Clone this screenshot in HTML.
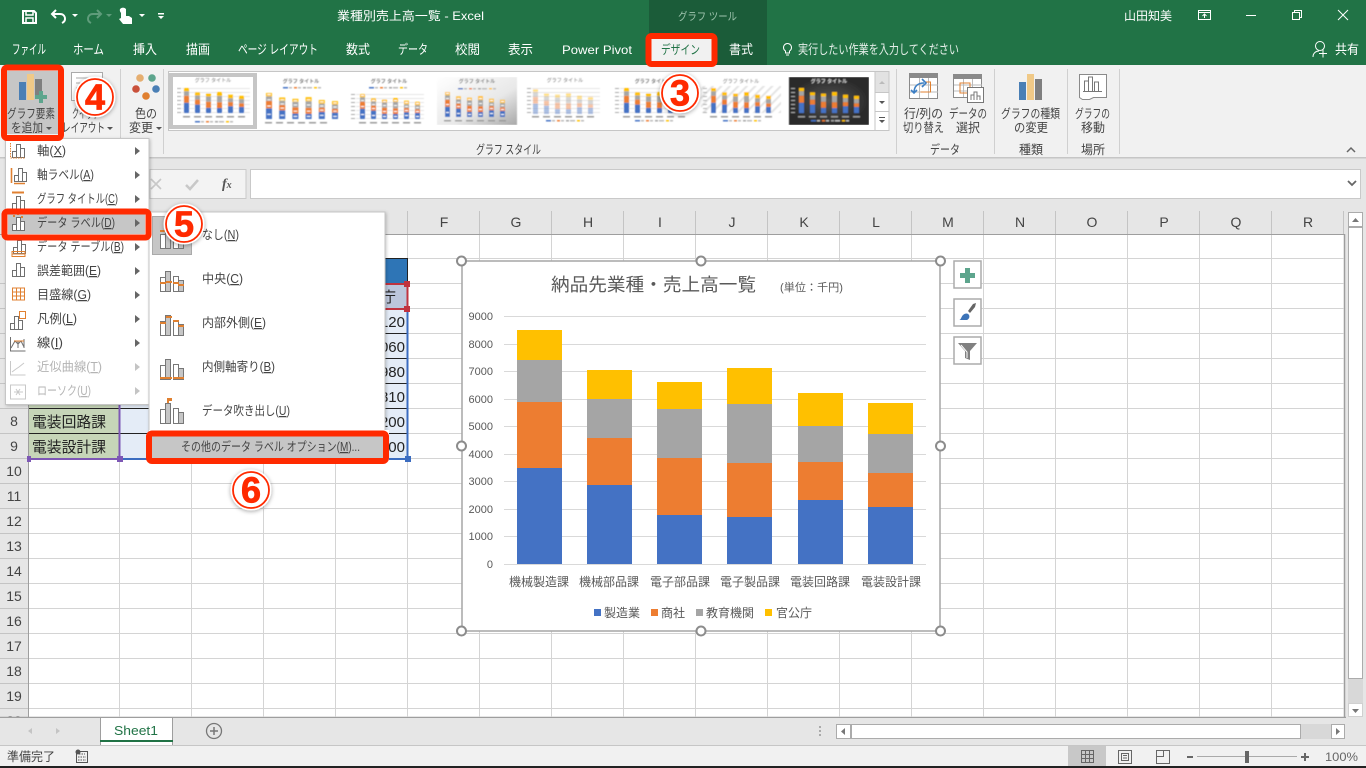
<!DOCTYPE html>
<html lang="ja"><head><meta charset="utf-8"><title>業種別売上高一覧 - Excel</title>
<style>
html,body{margin:0;padding:0;background:#fff;width:1366px;height:768px;overflow:hidden}
svg{display:block;font-family:"Liberation Sans","Noto Sans CJK JP",sans-serif}
.w text,text.w{fill:#fff}
.r{font-size:12.5px;fill:#444}
.m{font-size:12.5px;fill:#444}
.d{font-size:12.5px;fill:#b4b4b4}
.h{font-size:14px;fill:#444;text-anchor:middle}
.c{font-size:15px;fill:#222}
.n{font-size:15px;fill:#222;text-anchor:end}
.y{font-size:11px;fill:#595959;text-anchor:end}
.x{font-size:12px;fill:#595959}
.u{text-decoration:underline}
.num{font-size:36px;font-weight:bold;fill:#ff2a00;stroke:#ff2a00;stroke-width:.8px;text-anchor:middle;font-family:"Liberation Sans",sans-serif}
.tt{font-size:5px;fill:#777;text-anchor:middle}
</style></head><body>
<svg width="1366" height="768" viewBox="0 0 1366 768" xmlns="http://www.w3.org/2000/svg">
<defs>
<g id="mb">
<rect x="0" y="-10.3" width="5" height="10.3" fill="#4472c4"/><rect x="0" y="-17.3" width="5" height="7" fill="#ed7d31"/><rect x="0" y="-21.8" width="5" height="4.5" fill="#a5a5a5"/><rect x="0" y="-25" width="5" height="3.2" fill="#ffc000"/>
<rect x="11" y="-8.4" width="5" height="8.4" fill="#4472c4"/><rect x="11" y="-13.4" width="5" height="5" fill="#ed7d31"/><rect x="11" y="-17.6" width="5" height="4.2" fill="#a5a5a5"/><rect x="11" y="-20.7" width="5" height="3.1" fill="#ffc000"/>
<rect x="22" y="-5.2" width="5" height="5.2" fill="#4472c4"/><rect x="22" y="-11.3" width="5" height="6.1" fill="#ed7d31"/><rect x="22" y="-16.5" width="5" height="5.2" fill="#a5a5a5"/><rect x="22" y="-19.4" width="5" height="2.9" fill="#ffc000"/>
<rect x="33" y="-5" width="5" height="5" fill="#4472c4"/><rect x="33" y="-10.8" width="5" height="5.8" fill="#ed7d31"/><rect x="33" y="-17.1" width="5" height="6.3" fill="#a5a5a5"/><rect x="33" y="-21" width="5" height="3.9" fill="#ffc000"/>
<rect x="44" y="-6.8" width="5" height="6.8" fill="#4472c4"/><rect x="44" y="-10.9" width="5" height="4.1" fill="#ed7d31"/><rect x="44" y="-14.8" width="5" height="3.9" fill="#a5a5a5"/><rect x="44" y="-18.3" width="5" height="3.5" fill="#ffc000"/>
<rect x="55" y="-6.1" width="5" height="6.1" fill="#4472c4"/><rect x="55" y="-9.7" width="5" height="3.6" fill="#ed7d31"/><rect x="55" y="-13.9" width="5" height="4.2" fill="#a5a5a5"/><rect x="55" y="-17.2" width="5" height="3.3" fill="#ffc000"/>
</g>
<g id="lb" fill="#fff">
<rect x="1" y="-5" width="3" height="1"/><rect x="1" y="-13" width="3" height="1"/><rect x="1" y="-19" width="3" height="1"/><rect x="1" y="-24" width="3" height="1"/>
<rect x="12" y="-4" width="3" height="1"/><rect x="12" y="-11" width="3" height="1"/><rect x="12" y="-15" width="3" height="1"/><rect x="12" y="-19" width="3" height="1"/>
<rect x="23" y="-3" width="3" height="1"/><rect x="23" y="-8" width="3" height="1"/><rect x="23" y="-14" width="3" height="1"/><rect x="23" y="-18" width="3" height="1"/>
<rect x="34" y="-3" width="3" height="1"/><rect x="34" y="-8" width="3" height="1"/><rect x="34" y="-14" width="3" height="1"/><rect x="34" y="-19" width="3" height="1"/>
<rect x="45" y="-4" width="3" height="1"/><rect x="45" y="-9" width="3" height="1"/><rect x="45" y="-13" width="3" height="1"/><rect x="45" y="-17" width="3" height="1"/>
<rect x="56" y="-3" width="3" height="1"/><rect x="56" y="-8" width="3" height="1"/><rect x="56" y="-12" width="3" height="1"/><rect x="56" y="-16" width="3" height="1"/>
</g>
<g id="xl" fill="#9a9a9a"><rect x="0" y="0" width="7" height="1.5"/><rect x="11" y="0" width="7" height="1.5"/><rect x="22" y="0" width="7" height="1.5"/><rect x="33" y="0" width="7" height="1.5"/><rect x="44" y="0" width="7" height="1.5"/><rect x="55" y="0" width="7" height="1.5"/></g>
<g id="lg"><rect x="0" y="0" width="5" height="1.5" fill="#4472c4"/><rect x="6" y="0" width="3" height="1.5" fill="#bbb"/><rect x="11" y="0" width="3" height="1.5" fill="#ed7d31"/><rect x="15" y="0" width="3" height="1.5" fill="#bbb"/><rect x="20" y="0" width="3" height="1.5" fill="#a5a5a5"/><rect x="24" y="0" width="5" height="1.5" fill="#bbb"/><rect x="31" y="0" width="3" height="1.5" fill="#ffc000"/><rect x="35" y="0" width="3" height="1.5" fill="#bbb"/></g>
<g id="gr" stroke="#e6e6e6" stroke-width="1"><path d="M0 .5H68M0 4.500H68M0 8.500H68M0 12.500H68M0 16.500H68M0 20.500H68M0 24.500H68"/></g>
<g id="yl" fill="#aaa"><rect y="0" width="4" height="1"/><rect y="4" width="4" height="1"/><rect y="8" width="4" height="1"/><rect y="12" width="4" height="1"/><rect y="16" width="4" height="1"/><rect y="20" width="4" height="1"/><rect y="24" width="4" height="1"/></g>
<g id="mi" fill="#fff" stroke="#6f6f6f"><rect x=".5" y="7.500" width="4" height="6"/><rect x="4.500" y=".5" width="4" height="13"/><rect x="8.500" y="4.500" width="4" height="9"/></g>
<g id="sb" fill="#c6c6c6" stroke="#777"><rect x=".5" y="6.500" width="5" height="14" fill="#fff"/><rect x="5.500" y=".5" width="5" height="20"/><rect x="13.500" y="5.500" width="5" height="15" fill="#fff"/><rect x="18.500" y="9.500" width="5" height="11"/></g>
<filter id="sh" x="-30%" y="-30%" width="160%" height="160%"><feDropShadow dx="0" dy="1" stdDeviation="2" flood-color="#000" flood-opacity=".35"/></filter>
<filter id="ms" x="-5%" y="-5%" width="110%" height="110%"><feDropShadow dx="1" dy="1" stdDeviation="1.500" flood-color="#000" flood-opacity=".22"/></filter>
<filter id="bl" x="0" y="0" width="100%" height="100%"><feGaussianBlur stdDeviation=".4"/></filter>
<pattern id="hat" width="6" height="6" patternUnits="userSpaceOnUse" patternTransform="rotate(45)"><rect width="6" height="6" fill="#fff"/><rect width="2" height="6" fill="#e4e4e4"/></pattern>
<linearGradient id="gg" x1="0" x2="1" y1="0" y2="1"><stop offset="0" stop-color="#fff"/><stop offset=".6" stop-color="#e8e8e8"/><stop offset="1" stop-color="#a8a8a8"/></linearGradient>
<radialGradient id="dk"><stop offset="0" stop-color="#555"/><stop offset="1" stop-color="#2a2a2a"/></radialGradient>
</defs>

<!-- base -->
<rect width="1366" height="768" fill="#e6e6e6"/>
<rect width="1366" height="65" fill="#217346"/>
<rect x="649" width="118" height="65" fill="#1b5c39"/>

<!-- title bar -->
<g fill="none" stroke="#fff" stroke-width="2">
<path d="M23 11H34L36 13V23H23Z"/><path d="M26 11V15H33V11M26 23V18H33V23" stroke-width="1.500"/>
<path d="M56 10L52 14L56 18M52 14H60C64 14 65 17 65 19C65 21 64 22 62 23"/>
</g>
<path d="M72 14h6l-3 3z" fill="#fff"/>
<g fill="none" stroke="#5f9c7b" stroke-width="2"><path d="M97 10L101 14L97 18M101 14H93C89 14 88 17 88 19C88 21 89 22 91 23"/></g>
<path d="M106 14h6l-3 3z" fill="#5f9c7b"/>
<g fill="#fff"><path d="M120 9a4 4 0 0 1 6 0v7h3l3 2v6h-9l-4-5 2-1v-5a4 4 0 0 1-1-4z"/></g>
<path d="M139 14h6l-3 3z" fill="#fff"/>
<path d="M158 13h6v1.500h-6zM158 16h6l-3 3z" fill="#fff"/>
<g class="w" font-size="13">
<text x="337" y="20" font-size="12" textLength="147" lengthAdjust="spacingAndGlyphs">業種別売上高一覧  -  Excel</text>
<text x="1124" y="20" font-size="12" textLength="48" lengthAdjust="spacingAndGlyphs">山田知美</text>
<text x="12" y="54" textLength="34" lengthAdjust="spacingAndGlyphs">ファイル</text>
<text x="73" y="54" textLength="31" lengthAdjust="spacingAndGlyphs">ホーム</text>
<text x="133" y="54" textLength="24" lengthAdjust="spacingAndGlyphs">挿入</text>
<text x="186" y="54" textLength="24" lengthAdjust="spacingAndGlyphs">描画</text>
<text x="238" y="54" textLength="80" lengthAdjust="spacingAndGlyphs">ページ レイアウト</text>
<text x="346" y="54" textLength="24" lengthAdjust="spacingAndGlyphs">数式</text>
<text x="398" y="54" textLength="30" lengthAdjust="spacingAndGlyphs">データ</text>
<text x="455" y="54" textLength="25" lengthAdjust="spacingAndGlyphs">校閲</text>
<text x="508" y="54" textLength="25" lengthAdjust="spacingAndGlyphs">表示</text>
<text x="562" y="54" font-size="12" textLength="70" lengthAdjust="spacingAndGlyphs">Power Pivot</text>
<text x="729" y="54" textLength="24" lengthAdjust="spacingAndGlyphs">書式</text>
<text x="798" y="54" textLength="161" lengthAdjust="spacingAndGlyphs" style="fill:#e4eee8">実行したい作業を入力してください</text>
<text x="1335" y="54" textLength="24" lengthAdjust="spacingAndGlyphs">共有</text>
</g>
<text x="678" y="20" font-size="11" fill="#9fc4ae" textLength="59" lengthAdjust="spacingAndGlyphs">グラフ ツール</text>
<g fill="none" stroke="#fff" stroke-width="1">
<path d="M785.500 51a4 4 0 1 1 4 0v2h-4zM786 55h3"/>
<rect x="1198.500" y="10.500" width="12" height="9"/><path d="M1198.500 12.500h12M1204.500 18v-4M1202.500 16l2-2 2 2"/>
<path d="M1246 15.500h10"/>
<rect x="1292.500" y="12.500" width="7" height="7"/><path d="M1294.500 12.500v-2h7v7h-2"/>
<path d="M1338 10l10 10M1348 10l-10 10"/>
<circle cx="1320" cy="46" r="4.500"/><path d="M1313 57c0-4 3-6 6-6M1319 53.500h8M1323 49.500v8"/>
</g>

<!-- ribbon -->
<rect y="65" width="1366" height="92" fill="#f1f1f1"/>
<rect y="157" width="1366" height="1.500" fill="#c6c6c6"/>
<path d="M120.500 69V154M163.500 69V154M896.500 69V154M994.500 69V154M1067.500 69V154M1119.500 69V154" stroke="#d0d0d0" fill="none"/>
<!-- design tab -->
<rect x="650" y="37" width="63" height="29" fill="#f1f1f1"/>
<text x="661" y="54" class="r" style="fill:#217346" textLength="39" lengthAdjust="spacingAndGlyphs">デザイン</text>

<!-- add chart element button -->
<rect x="7" y="71" width="51" height="63" fill="#c6c6c6"/>
<rect x="19" y="82" width="7" height="18" fill="#4a7fb5"/><rect x="27" y="74" width="7" height="26" fill="#f0c987"/><rect x="35" y="79" width="7" height="17" fill="#7f7f7f"/>
<path d="M39 91h4v4h4v4h-4v4h-4v-4h-4v-4h4z" fill="#5da58d"/>
<text x="7" y="118" class="r" textLength="48" lengthAdjust="spacingAndGlyphs">グラフ要素</text>
<text x="11" y="132" class="r" textLength="32" lengthAdjust="spacingAndGlyphs">を追加</text>
<path d="M46 127h6l-3 3z" fill="#555"/>
<!-- quick layout -->
<rect x="71.500" y="72.500" width="31" height="28" fill="#fff" stroke="#aaa"/><path d="M76 78h14M76 83h10M76 88h8" stroke="#aaa"/>
<text x="72" y="118" class="r" textLength="28" lengthAdjust="spacingAndGlyphs">クイック</text>
<text x="62" y="132" class="r" textLength="43" lengthAdjust="spacingAndGlyphs">レイアウト</text>
<path d="M107 127h6l-3 3z" fill="#555"/>
<!-- colors -->
<circle cx="140" cy="78" r="3.800" fill="#e5ae70"/><circle cx="152" cy="78" r="3.800" fill="#5da58d"/><circle cx="136" cy="89" r="3.800" fill="#c9513b"/><circle cx="156" cy="89" r="3.800" fill="#4a7fb5"/><circle cx="146" cy="96" r="3.800" fill="#e08030"/>
<text x="135" y="118" class="r" textLength="22" lengthAdjust="spacingAndGlyphs">色の</text>
<text x="129" y="132" class="r" textLength="24" lengthAdjust="spacingAndGlyphs">変更</text>
<path d="M156 127h6l-3 3z" fill="#555"/>

<!-- gallery -->
<rect x="168.500" y="71.500" width="720" height="59" fill="#fff" stroke="#c6c6c6"/>
<rect x="169" y="73" width="88" height="56" fill="#c6c6c6"/>
<rect x="173" y="77" width="80" height="48" fill="#fff"/>
<g filter="url(#bl)">
<use href="#gr" x="182" y="88"/><use href="#yl" x="177" y="88"/>
<use href="#mb" x="184" y="113"/><use href="#xl" x="183" y="116"/><use href="#lg" x="195" y="121"/>
<text x="213" y="82" class="tt">グラフ タイトル</text>

<text x="301" y="83" class="tt" style="font-weight:bold">グラフ タイトル</text>
<use href="#lg" x="283" y="87"/>
<g transform="translate(266 119) scale(1.200 1.040)"><use href="#mb"/><use href="#lb"/></g>
<use href="#xl" x="265" y="122"/>

<text x="389" y="83" class="tt" style="font-weight:bold">グラフ タイトル</text>
<use href="#lg" x="369" y="87"/><use href="#yl" x="351" y="94"/>
<use href="#gr" x="356" y="94"/>
<use href="#mb" x="360" y="119"/><use href="#lb" x="360" y="119"/><use href="#xl" x="359" y="122"/>

<rect x="437" y="77" width="80" height="48" fill="url(#gg)"/>
<text x="477" y="83" class="tt" style="font-weight:bold">グラフ タイトル</text>
<use href="#lg" x="458" y="88"/>
<g transform="translate(445 117)"><use href="#mb"/><use href="#lb"/></g><use href="#xl" x="444" y="120"/>

<text x="565" y="82" class="tt">グラフ タイトル</text>
<use href="#gr" x="532" y="88"/><use href="#yl" x="527" y="88"/>
<g opacity=".45"><use href="#mb" x="533" y="114"/></g><use href="#xl" x="532" y="116"/><use href="#lg" x="546" y="120"/>

<text x="653" y="83" class="tt" style="font-weight:bold">グラフ タイトル</text>
<use href="#yl" x="615" y="88"/><use href="#gr" x="620" y="88"/>
<use href="#mb" x="624" y="113"/><use href="#xl" x="623" y="116"/><use href="#lg" x="635" y="120"/>

<rect x="701" y="86" width="80" height="27" fill="url(#hat)"/>
<text x="741" y="83" class="tt">グラフ タイトル</text><use href="#yl" x="703" y="88"/>
<use href="#mb" x="711" y="113"/><use href="#xl" x="710" y="116"/><use href="#lg" x="723" y="120"/>

<rect x="789" y="77" width="80" height="48" fill="url(#dk)"/>
<text x="829" y="83" class="tt" style="fill:#ddd;font-weight:bold">グラフ タイトル</text><use href="#yl" x="791" y="88"/>
<use href="#mb" x="799" y="113"/><use href="#xl" x="798" y="116"/><use href="#lg" x="811" y="120"/>
</g>

<rect x="875" y="71.500" width="14" height="21" fill="#e2e2e2" stroke="#c6c6c6"/><rect x="875" y="92.500" width="14" height="19" fill="#fff" stroke="#c6c6c6"/><rect x="875" y="111.500" width="14" height="19" fill="#fff" stroke="#c6c6c6"/>
<path d="M879 84h6l-3-3z" fill="#bbb"/><path d="M879 101h6l-3 3z" fill="#555"/><path d="M879 117h6v1h-6zM879 120h6l-3 3z" fill="#555"/>

<text x="476" y="154" class="r" textLength="65" lengthAdjust="spacingAndGlyphs">グラフ スタイル</text>
<text x="930" y="154" class="r" textLength="30" lengthAdjust="spacingAndGlyphs">データ</text>
<text x="1019" y="154" class="r" textLength="24" lengthAdjust="spacingAndGlyphs">種類</text>
<text x="1081" y="154" class="r" textLength="24" lengthAdjust="spacingAndGlyphs">場所</text>
<path d="M1347 152l4-4 4 4" fill="none" stroke="#666" stroke-width="1.500"/>

<!-- right ribbon icons -->
<rect x="909.500" y="73.500" width="28" height="25" fill="#fff" stroke="#8a8a8a"/><rect x="909" y="73" width="29" height="5" fill="#8a8a8a"/>
<path d="M919.500 78v20M928.500 78v20M910 85h28M910 92h28" stroke="#bbb"/>
<path d="M924.500 82h6v10h-10" fill="none" stroke="#e08030"/>
<path d="M914 93c0-7 4-10 10-10M922 79l4 4-4 4M911 90l3 3 3-3" fill="none" stroke="#3d7fc4" stroke-width="1.600"/>
<rect x="953.500" y="74.500" width="28" height="23" fill="#fff" stroke="#8a8a8a"/><rect x="953" y="74" width="29" height="5" fill="#8a8a8a"/>
<path d="M963.500 79v18M972.500 79v18M954 85h28M954 91h28" stroke="#bbb"/><path d="M960 83h10v10h-10z" fill="none" stroke="#e08030"/>
<rect x="967.500" y="87.500" width="16" height="15" fill="#fff" stroke="#777"/><path d="M971 100v-5h3v5M974 100v-8h3v8M977 100v-4h3v4" fill="none" stroke="#777"/>
<rect x="1019" y="82" width="7" height="18" fill="#4a7fb5"/><rect x="1027" y="74" width="7" height="26" fill="#f0c987"/><rect x="1035" y="79" width="7" height="21" fill="#7f7f7f"/>
<path d="M1079.500 74.500h27v23h-13l-4 2h-7l-3-2z" fill="#fff" stroke="#8a8a8a"/>
<path d="M1084.500 91v-10h4v10M1088.500 91v-14h4v14M1094.500 91v-9h4v9M1083 91.500h19" fill="none" stroke="#777"/>
<text x="904" y="118" class="r" textLength="39" lengthAdjust="spacingAndGlyphs">行/列の</text>
<text x="903" y="132" class="r" textLength="41" lengthAdjust="spacingAndGlyphs">切り替え</text>
<text x="949" y="118" class="r" textLength="38" lengthAdjust="spacingAndGlyphs">データの</text>
<text x="956" y="132" class="r" textLength="24" lengthAdjust="spacingAndGlyphs">選択</text>
<text x="1001" y="118" class="r" textLength="59" lengthAdjust="spacingAndGlyphs">グラフの種類</text>
<text x="1014" y="132" class="r" textLength="34" lengthAdjust="spacingAndGlyphs">の変更</text>
<text x="1075" y="118" class="r" textLength="35" lengthAdjust="spacingAndGlyphs">グラフの</text>
<text x="1081" y="132" class="r" textLength="24" lengthAdjust="spacingAndGlyphs">移動</text>

<!-- formula bar -->
<rect x="150" y="169.500" width="96" height="29" fill="#f3f3f3" stroke="#c9c9c9"/>
<rect x="250.500" y="169.500" width="1110" height="29" fill="#fff" stroke="#c9c9c9"/>
<path d="M151 179l10 10M161 179l-10 10" stroke="#c8c8c8" stroke-width="1.600"/>
<path d="M186 185l4 4 8-9" fill="none" stroke="#c8c8c8" stroke-width="2.500"/>
<text x="222" y="188" font-size="14" fill="#555" style="font-family:'Liberation Serif',serif;font-style:italic;font-weight:bold">f<tspan font-size="10">x</tspan></text>
<path d="M1348 181l4 4 4-4" fill="none" stroke="#666" stroke-width="1.800"/>

<!-- sheet -->
<rect x="29" y="235" width="1315" height="482" fill="#fff"/>
<path d="M0 234.500H1344M28.500 211V717" stroke="#9e9e9e" fill="none"/>
<path d="M1344.500 234V717M0 717.500H1346" stroke="#9e9e9e" stroke-width="1.500" fill="none"/>
<path d="M119.500 235V717M191.500 235V717M263.500 235V717M335.500 235V717M407.500 235V717M479.500 235V717M551.500 235V717M623.500 235V717M695.500 235V717M767.500 235V717M839.500 235V717M911.500 235V717M983.500 235V717M1055.500 235V717M1127.500 235V717M1199.500 235V717M1271.500 235V717M29 258.500H1344M29 283.500H1344M29 308.500H1344M29 333.500H1344M29 358.500H1344M29 383.500H1344M29 408.500H1344M29 433.500H1344M29 458.500H1344M29 483.500H1344M29 508.500H1344M29 533.500H1344M29 558.500H1344M29 583.500H1344M29 608.500H1344M29 633.500H1344M29 658.500H1344M29 683.500H1344M29 708.500H1344" stroke="#d4d4d4" fill="none"/>
<path d="M407.500 211V234M479.500 211V234M551.500 211V234M623.500 211V234M695.500 211V234M767.500 211V234M839.500 211V234M911.500 211V234M983.500 211V234M1055.500 211V234M1127.500 211V234M1199.500 211V234M1271.500 211V234M1343.500 211V234" stroke="#c4c4c4" fill="none"/>
<path d="M0 283.500H28M0 308.500H28M0 333.500H28M0 358.500H28M0 383.500H28M0 408.500H28M0 433.500H28M0 458.500H28M0 483.500H28M0 508.500H28M0 533.500H28M0 558.500H28M0 583.500H28M0 608.500H28M0 633.500H28M0 658.500H28M0 683.500H28M0 708.500H28" stroke="#c4c4c4" fill="none"/>
<text class="h" x="444" y="227">F</text><text class="h" x="516" y="227">G</text><text class="h" x="588" y="227">H</text><text class="h" x="660" y="227">I</text><text class="h" x="732" y="227">J</text><text class="h" x="804" y="227">K</text><text class="h" x="876" y="227">L</text><text class="h" x="948" y="227">M</text><text class="h" x="1020" y="227">N</text><text class="h" x="1092" y="227">O</text><text class="h" x="1164" y="227">P</text><text class="h" x="1236" y="227">Q</text><text class="h" x="1308" y="227">R</text>
<text class="h" x="14" y="426">8</text><text class="h" x="14" y="451">9</text><text class="h" x="14" y="476">10</text><text class="h" x="14" y="501">11</text><text class="h" x="14" y="526">12</text><text class="h" x="14" y="551">13</text><text class="h" x="14" y="576">14</text><text class="h" x="14" y="601">15</text><text class="h" x="14" y="626">16</text><text class="h" x="14" y="651">17</text><text class="h" x="14" y="676">18</text><text class="h" x="14" y="701">19</text><text class="h" x="14" y="726">20</text>
<rect x="0" y="717" width="1346" height="28" fill="#e6e6e6"/>
<path d="M0 717.500H1346" stroke="#9e9e9e"/>

<!-- table -->
<rect x="29" y="404" width="90" height="55" fill="#c6d5b8"/>
<rect x="120" y="404" width="288" height="55" fill="#e4ecf7"/>
<rect x="336" y="259" width="72" height="25" fill="#2e75b6"/>
<rect x="336" y="284" width="72" height="25" fill="#bcc6dc"/>
<rect x="336" y="309" width="72" height="150" fill="#e4ecf7"/>
<path d="M29 408.500H408M29 433.500H408M336 308.500H408M336 333.500H408M336 358.500H408M336 383.500H408M119.500 404V459M407.500 259V284" stroke="#222" fill="none"/>
<path d="M336 258.500H408" stroke="#222"/>
<text class="c" x="32" y="427" textLength="74" lengthAdjust="spacingAndGlyphs">電装回路課</text>
<text class="c" x="32" y="452" textLength="74" lengthAdjust="spacingAndGlyphs">電装設計課</text>
<text class="n" x="396" y="302">庁</text>
<text class="n" x="405" y="327">1120</text><text class="n" x="405" y="352">1060</text><text class="n" x="405" y="377">1980</text><text class="n" x="405" y="402">1810</text><text class="n" x="405" y="427">1200</text><text class="n" x="405" y="452">1200</text>
<path d="M337 284H407.500V309H337" fill="none" stroke="#c0333f" stroke-width="2"/>
<path d="M407.500 309V459M120 459H407" fill="none" stroke="#3b6cc0" stroke-width="2"/>
<path d="M29 459H120M119.500 404V459" fill="none" stroke="#7d57b5" stroke-width="2"/>
<rect x="404" y="281" width="6" height="6" fill="#c0333f"/><rect x="404" y="306" width="6" height="6" fill="#c0333f"/>
<rect x="405" y="456" width="6" height="6" fill="#3b6cc0"/><rect x="117" y="456" width="6" height="6" fill="#7d57b5"/><rect x="27" y="456" width="4" height="6" fill="#7d57b5"/>

<!-- chart -->
<rect x="462" y="261" width="478" height="370" fill="#fff" stroke="#a6a6a6" stroke-width="1.500"/>
<text x="551" y="291" font-size="18" fill="#595959" textLength="205" lengthAdjust="spacingAndGlyphs">納品先業種・売上高一覧</text>
<text x="780" y="291" font-size="11" fill="#595959" textLength="63" lengthAdjust="spacingAndGlyphs">(単位：千円)</text>
<path d="M504 316.500H926M504 344.500H926M504 371.500H926M504 399.500H926M504 426.500H926M504 454.500H926M504 481.500H926M504 509.500H926M504 536.500H926M504 564.500H926" stroke="#d9d9d9"/>
<text class="y" x="493" y="320">9000</text><text class="y" x="493" y="348">8000</text><text class="y" x="493" y="375">7000</text><text class="y" x="493" y="403">6000</text><text class="y" x="493" y="430">5000</text><text class="y" x="493" y="458">4000</text><text class="y" x="493" y="485">3000</text><text class="y" x="493" y="513">2000</text><text class="y" x="493" y="540">1000</text><text class="y" x="493" y="568">0</text>
<g fill="#4472c4"><rect x="517" y="468" width="45" height="96"/><rect x="587" y="485" width="45" height="79"/><rect x="657" y="515" width="45" height="49"/><rect x="727" y="517" width="45" height="47"/><rect x="798" y="500" width="45" height="64"/><rect x="868" y="507" width="45" height="57"/></g>
<g fill="#ed7d31"><rect x="517" y="402" width="45" height="66"/><rect x="587" y="438" width="45" height="47"/><rect x="657" y="458" width="45" height="57"/><rect x="727" y="463" width="45" height="54"/><rect x="798" y="462" width="45" height="38"/><rect x="868" y="473" width="45" height="34"/></g>
<g fill="#a5a5a5"><rect x="517" y="360" width="45" height="42"/><rect x="587" y="399" width="45" height="39"/><rect x="657" y="409" width="45" height="49"/><rect x="727" y="404" width="45" height="59"/><rect x="798" y="426" width="45" height="36"/><rect x="868" y="434" width="45" height="39"/></g>
<g fill="#ffc000"><rect x="517" y="330" width="45" height="30"/><rect x="587" y="370" width="45" height="29"/><rect x="657" y="382" width="45" height="27"/><rect x="727" y="368" width="45" height="36"/><rect x="798" y="393" width="45" height="33"/><rect x="868" y="403" width="45" height="31"/></g>
<text class="x" x="509" y="586">機械製造課</text><text class="x" x="579" y="586">機械部品課</text><text class="x" x="650" y="586">電子部品課</text><text class="x" x="720" y="586">電子製品課</text><text class="x" x="790" y="586">電装回路課</text><text class="x" x="861" y="586">電装設計課</text>
<text class="x" x="604" y="617">製造業</text><text class="x" x="661" y="617">商社</text><text class="x" x="706" y="617">教育機関</text><text class="x" x="776" y="617">官公庁</text>
<rect x="594" y="609" width="7" height="7" fill="#4472c4"/><rect x="651" y="609" width="7" height="7" fill="#ed7d31"/><rect x="696" y="609" width="7" height="7" fill="#a5a5a5"/><rect x="765" y="609" width="7" height="7" fill="#ffc000"/>
<g fill="#fff" stroke="#8c8c8c" stroke-width="2"><circle cx="461.500" cy="261" r="4.500"/><circle cx="701" cy="261" r="4.500"/><circle cx="940.500" cy="261" r="4.500"/><circle cx="461.500" cy="446" r="4.500"/><circle cx="940.500" cy="446" r="4.500"/><circle cx="461.500" cy="631" r="4.500"/><circle cx="701" cy="631" r="4.500"/><circle cx="940.500" cy="631" r="4.500"/></g>
<g fill="#fff" stroke="#ababab" stroke-width="1.500"><rect x="954" y="261" width="27" height="27"/><rect x="954" y="299" width="27" height="27"/><rect x="954" y="337" width="27" height="27"/></g>
<path d="M965 268h5v5h5v5h-5v5h-5v-5h-5v-5h5z" fill="#5da58d"/>
<path d="M968 311l5-7 3-1-1 4-5 6z" fill="#666"/><path d="M959 320c2 0 2-3 4-5 2-2 5-2 6 0 1 2 0 4-2 5z" fill="#3d74b8"/>
<path d="M958 343h19l-7 8v9l-5-2v-7z" fill="#808080"/><path d="M961 345l6 7v6" fill="none" stroke="#fff"/>

<!-- vertical scroll -->
<rect x="1346" y="211" width="20" height="506" fill="#e6e6e6"/>
<rect x="1348" y="227" width="15" height="476" fill="#d8d8d8"/>
<rect x="1348.500" y="227.500" width="14" height="451" fill="#fff" stroke="#ababab"/>
<rect x="1348.500" y="212.500" width="14" height="14" fill="#fff" stroke="#ababab"/>
<rect x="1348.500" y="703.500" width="14" height="13" fill="#fff" stroke="#d0d0d0"/>
<path d="M1352 222h7l-3.500-4z" fill="#777"/><path d="M1352 709h7l-3.500 4z" fill="#777"/>

<!-- tabs -->
<path d="M32 728v6l-4-3zM56 728v6l4-3z" fill="#c4c4c4"/>
<path d="M100.500 745V717.500H172.500V745" fill="#fff" stroke="#9e9e9e"/>
<rect x="100" y="740" width="73" height="2" fill="#217346"/>
<text x="114" y="735" font-size="13" fill="#217346" textLength="44" lengthAdjust="spacingAndGlyphs">Sheet1</text>
<circle cx="214" cy="731" r="7.500" fill="none" stroke="#777" stroke-width="1.300"/><path d="M210 731h8M214 727v8" stroke="#777" stroke-width="1.500"/>
<path d="M820 726v2M820 730v2M820 734v2" stroke="#aaa" stroke-width="2"/>
<rect x="837" y="724" width="508" height="15" fill="#d8d8d8"/>
<rect x="836.500" y="724.500" width="14" height="14" fill="#fff" stroke="#ababab"/>
<rect x="851.500" y="724.500" width="449" height="14" fill="#fff" stroke="#ababab"/>
<rect x="1331.500" y="724.500" width="13" height="14" fill="#fff" stroke="#ababab"/>
<path d="M845 728v7l-4-3.500zM1336 728v7l4-3.500z" fill="#777"/>

<!-- status -->
<rect y="745" width="1366" height="21" fill="#f1f1f1"/><rect y="745" width="1366" height="1" fill="#c6c6c6"/><rect y="766" width="1366" height="2" fill="#222"/>
<text x="7" y="761" class="r" textLength="48" lengthAdjust="spacingAndGlyphs">準備完了</text>
<circle cx="78" cy="752" r="2.500" fill="#555"/><rect x="76.500" y="751.500" width="11" height="11" fill="none" stroke="#555"/><path d="M79 754h6M78 757h8M78 760h8" stroke="#555" stroke-dasharray="1.500 1"/>
<rect x="1068" y="746" width="38" height="20" fill="#c8c8c8"/>
<path d="M1081.500 750.500h12v12h-12zM1085.500 750.500v12M1089.500 750.500v12M1081.500 754.500h12M1081.500 758.500h12" fill="none" stroke="#666"/>
<path d="M1118.500 750.500h13v13h-13zM1121.500 753.500h7v7h-7zM1123 755.500h4M1123 758h4" fill="none" stroke="#666"/>
<path d="M1156.500 750.500h13v13h-13zM1163.500 750.500v6h-7" fill="none" stroke="#666"/>
<path d="M1187 757h6" stroke="#666" stroke-width="2"/>
<path d="M1197 756.500h100" stroke="#aaa"/>
<rect x="1245" y="751" width="4" height="12" fill="#666"/>
<path d="M1301 757h8M1305 753v8" stroke="#666" stroke-width="2"/>
<text x="1325" y="761" font-size="12" fill="#666" textLength="33" lengthAdjust="spacingAndGlyphs">100%</text>

<!-- dropdown menu -->
<rect x="5.500" y="138.500" width="143.500" height="266" fill="#fff" stroke="#c6c6c6" filter="url(#ms)"/>
<rect x="149" y="212" width="236" height="247" fill="#fff" stroke="#c6c6c6" filter="url(#ms)"/>
<rect x="8" y="214" width="137" height="20" fill="#c6c6c6"/>

<use href="#mi" x="12" y="144"/><path d="M10.500 143v15h15" fill="none" stroke="#e08030" stroke-dasharray="1.500 1"/>
<use href="#mi" x="14" y="168"/><path d="M11.500 168v15M14 183.500h11" fill="none" stroke="#e08030" stroke-width="1.600"/>
<use href="#mi" x="12" y="196"/><path d="M12 192.500h12" stroke="#e08030" stroke-width="2"/>
<use href="#mi" x="12" y="217"/><path d="M13 216h2M17 214h2M21 217h2" stroke="#e08030" stroke-width="2"/>
<use href="#mi" x="13" y="240"/><path d="M12 251.500h13v5h-13zM12 254h13" fill="none" stroke="#e08030"/>
<use href="#mi" x="12" y="263"/>
<path d="M12.500 288h12v12h-12zM16.500 288v12M20.500 288v12M12.500 292h12M12.500 296h12" fill="none" stroke="#e08030"/>
<use href="#mi" x="10" y="316"/><rect x="19.500" y="311.500" width="6" height="7" fill="#fff" stroke="#e08030"/>
<path d="M10.500 337v14h15M11 348l4-7 3 3 3-3 3 6M18 341v7M24 339v9" fill="none" stroke="#6f6f6f"/><path d="M14 341h10" stroke="#e08030"/>
<path d="M10.500 361v14h15M12 372l4-3 3-2 5-4" fill="none" stroke="#c8c8c8"/>
<path d="M10.500 385v14h15v-14z" fill="none" stroke="#c8c8c8"/><path d="M14 392h9M16 389l4 6M20 389l-4 6" stroke="#c8c8c8"/>

<text class="m" x="37" y="155" textLength="29" lengthAdjust="spacingAndGlyphs">軸(<tspan class="u">X</tspan>)</text>
<text class="m" x="37" y="179" textLength="57" lengthAdjust="spacingAndGlyphs">軸ラベル(<tspan class="u">A</tspan>)</text>
<text class="m" x="37" y="203" textLength="81" lengthAdjust="spacingAndGlyphs">グラフ タイトル(<tspan class="u">C</tspan>)</text>
<text class="m" x="37" y="227" textLength="78" lengthAdjust="spacingAndGlyphs">データ ラベル(<tspan class="u">D</tspan>)</text>
<text class="m" x="37" y="251" textLength="87" lengthAdjust="spacingAndGlyphs">データ テーブル(<tspan class="u">B</tspan>)</text>
<text class="m" x="37" y="275" textLength="64" lengthAdjust="spacingAndGlyphs">誤差範囲(<tspan class="u">E</tspan>)</text>
<text class="m" x="37" y="299" textLength="54" lengthAdjust="spacingAndGlyphs">目盛線(<tspan class="u">G</tspan>)</text>
<text class="m" x="37" y="323" textLength="40" lengthAdjust="spacingAndGlyphs">凡例(<tspan class="u">L</tspan>)</text>
<text class="m" x="37" y="347" textLength="26" lengthAdjust="spacingAndGlyphs">線(<tspan class="u">I</tspan>)</text>
<text class="d" x="37" y="371" textLength="65" lengthAdjust="spacingAndGlyphs">近似曲線(<tspan class="u">T</tspan>)</text>
<text class="d" x="37" y="395" textLength="54" lengthAdjust="spacingAndGlyphs">ローソク(<tspan class="u">U</tspan>)</text>
<path d="M135 147v8l5-4zM135 171v8l5-4zM135 195v8l5-4zM135 219v8l5-4zM135 243v8l5-4zM135 267v8l5-4zM135 291v8l5-4zM135 315v8l5-4zM135 339v8l5-4z" fill="#666"/>
<path d="M135 363v8l5-4zM135 387v8l5-4z" fill="#c4c4c4"/>

<!-- submenu -->
<rect x="152.500" y="216.500" width="39" height="38" fill="#c6c6c6" stroke="#aaa"/>
<use href="#sb" x="160" y="228"/><path d="M160 231h6" stroke="#e08030" stroke-width="2"/>
<use href="#sb" x="160" y="271"/><path d="M160 283h6M166 282h6M173 283h6M178 285h6" stroke="#e08030" stroke-width="2"/>
<use href="#sb" x="160" y="315"/><path d="M160 323h6M166 317h6M173 321h6M178 326h6" stroke="#e08030" stroke-width="2"/>
<use href="#sb" x="160" y="359"/><path d="M160 378h6M166 378h6M173 378h6M178 378h6" stroke="#e08030" stroke-width="2"/>
<use href="#sb" x="160" y="403"/><path d="M167 398h5v3h-3v2h-2z" fill="#e08030"/>
<text class="m" x="202" y="239" textLength="37" lengthAdjust="spacingAndGlyphs">なし(<tspan class="u">N</tspan>)</text>
<text class="m" x="202" y="283" textLength="41" lengthAdjust="spacingAndGlyphs">中央(<tspan class="u">C</tspan>)</text>
<text class="m" x="202" y="327" textLength="64" lengthAdjust="spacingAndGlyphs">内部外側(<tspan class="u">E</tspan>)</text>
<text class="m" x="202" y="371" textLength="73" lengthAdjust="spacingAndGlyphs">内側軸寄り(<tspan class="u">B</tspan>)</text>
<text class="m" x="202" y="415" textLength="88" lengthAdjust="spacingAndGlyphs">データ吹き出し(<tspan class="u">U</tspan>)</text>
<rect x="149" y="430" width="240" height="34" fill="#fff"/>
<rect x="150" y="434" width="235" height="26" fill="#c6c6c6"/>
<text class="m" x="181" y="451" textLength="179" lengthAdjust="spacingAndGlyphs">その他のデータ ラベル オプション(<tspan class="u">M</tspan>)...</text>

<!-- red call-outs -->
<g fill="none" stroke="#ff2a00" stroke-width="6">
<rect x="4" y="67.500" width="57" height="70.500" rx="3"/>
<rect x="4.500" y="211.500" width="144" height="26" rx="3"/>
<rect x="149" y="433.500" width="237" height="27.500" rx="3"/>
<rect x="648.500" y="36" width="66" height="28" rx="3"/>
</g>
<g filter="url(#sh)"><circle cx="680" cy="93" r="20.500" fill="#fff"/></g><circle cx="680" cy="93" r="18" fill="#fff" stroke="#ff2a00" stroke-width="1.800"/><text class="num" x="680" y="105.500">3</text>
<g filter="url(#sh)"><circle cx="95" cy="97" r="20.500" fill="#fff"/></g><circle cx="95" cy="97" r="18" fill="#fff" stroke="#ff2a00" stroke-width="1.800"/><text class="num" x="95" y="109.500">4</text>
<g filter="url(#sh)"><circle cx="184" cy="224" r="20.500" fill="#fff"/></g><circle cx="184" cy="224" r="18" fill="#fff" stroke="#ff2a00" stroke-width="1.800"/><text class="num" x="184" y="236.500">5</text>
<g filter="url(#sh)"><circle cx="251" cy="490" r="20.500" fill="#fff"/></g><circle cx="251" cy="490" r="18" fill="#fff" stroke="#ff2a00" stroke-width="1.800"/><text class="num" x="251" y="502.500">6</text>
</svg>
</body></html>
